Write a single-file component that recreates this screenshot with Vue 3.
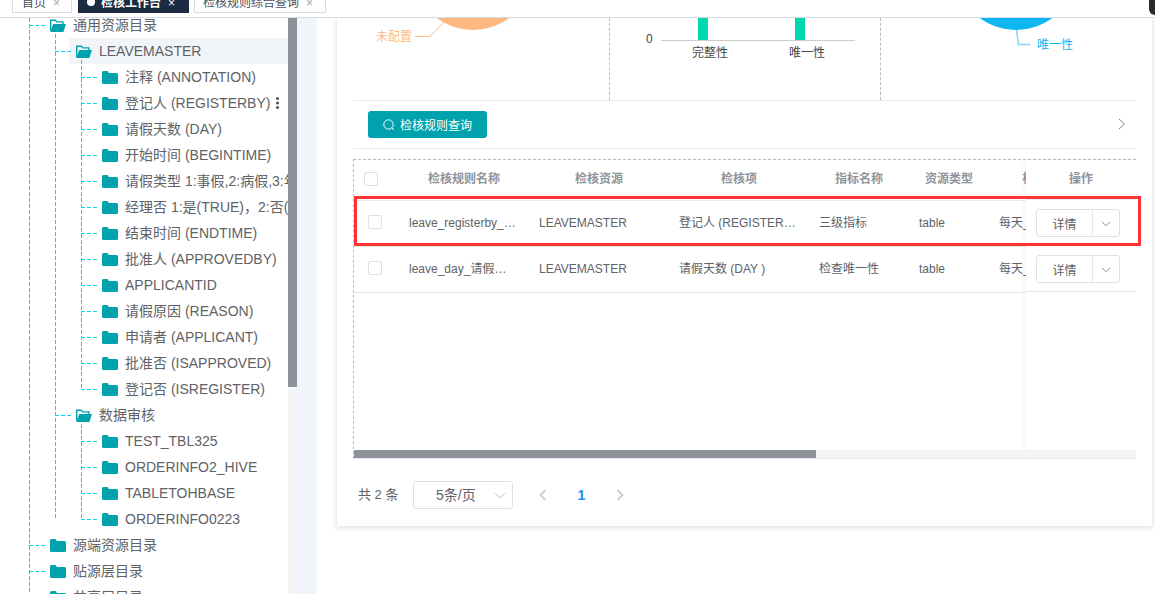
<template>
  <div class="page">
    <header class="tabbar">
      <div class="tabs">
        <div class="tab">首页<span class="close">×</span></div>
        <div class="tab active"><i class="dot"></i>检核工作台<span class="close">×</span></div>
        <div class="tab">检核规则综合查询<span class="close">×</span></div>
      </div>
      <div class="corner"></div>
    </header>

    <div class="body">
      <aside class="sidebar">
        <div class="tree-wrap">
          <ul class="tree">
            <li v-for="root in tree" :key="root.label">
              <div class="row">
                <div class="node">
                  <svg v-if="root.children" class="folder" viewBox="0 0 16 13"><path d="M.7 12V1.2h4.6l1.4 1.7h6.2v2" fill="none" stroke="#00a2ae" stroke-width="1.4"/><path d="M3.2 5H16l-2.6 8H.4z" fill="#00a2ae"/></svg>
                  <svg v-else class="folder" viewBox="0 0 16 13"><path d="M0 1.5A1.5 1.5 0 0 1 1.5 0h4L7 2h7.5A1.5 1.5 0 0 1 16 3.500v8a1.500 1.500 0 0 1-1.500 1.500h-13A1.500 1.500 0 0 1 0 11.500z" fill="#00a2ae"/></svg>
                  <span>{{ root.label }}</span>
                </div>
              </div>
              <ul v-if="root.children" class="children">
                <li v-for="group in root.children" :key="group.label">
                  <div class="row">
                    <div class="node" :class="{ current: group.current }">
                      <svg class="folder" viewBox="0 0 16 13"><path d="M.7 12V1.2h4.6l1.4 1.7h6.2v2" fill="none" stroke="#00a2ae" stroke-width="1.4"/><path d="M3.2 5H16l-2.6 8H.4z" fill="#00a2ae"/></svg>
                      <span>{{ group.label }}</span>
                    </div>
                  </div>
                  <ul class="children">
                    <li v-for="leaf in group.children" :key="leaf">
                      <div class="row">
                        <div class="node">
                          <svg class="folder" viewBox="0 0 16 13"><path d="M0 1.5A1.5 1.5 0 0 1 1.5 0h4L7 2h7.5A1.5 1.5 0 0 1 16 3.500v8a1.500 1.500 0 0 1-1.500 1.500h-13A1.500 1.500 0 0 1 0 11.500z" fill="#00a2ae"/></svg>
                          <span>{{ leaf }}</span>
                        </div>
                        <i v-if="leaf.startsWith('登记人')" class="kebab"></i>
                      </div>
                    </li>
                  </ul>
                </li>
              </ul>
            </li>
          </ul>
        </div>
        <div class="scroll-y"><div class="scroll-y-thumb"></div></div>
      </aside>
      <div class="gutter"></div>

      <main class="main">
        <section class="card">
          <div class="charts">
            <div class="chart">
              <svg width="256" height="82" viewBox="353 18 256 82">
                <circle cx="473" cy="-31" r="61" fill="#ffb980"/>
                <path d="M415 36.500h15l15-15" fill="none" stroke="#ffb980"/>
                <text x="376" y="41" class="pie-label" fill="#ffb980">未配置</text>
              </svg>
            </div>
            <div class="chart">
              <svg width="270" height="82" viewBox="610 18 270 82">
                <rect x="698" y="18" width="10" height="22" fill="#00d8b0"/>
                <rect x="795" y="18" width="10" height="22" fill="#00d8b0"/>
                <path d="M661 40.500h194" stroke="#ccc"/>
                <text x="646" y="43" class="axis">0</text>
                <text x="710" y="57" class="axis" text-anchor="middle">完整性</text>
                <text x="807" y="57" class="axis" text-anchor="middle">唯一性</text>
              </svg>
            </div>
            <div class="chart last">
              <svg width="255" height="82" viewBox="881 18 255 82">
                <circle cx="1016" cy="-31" r="61" fill="#0cb6f0"/>
                <path d="M1016.500 30l2 14.500h12" fill="none" stroke="#7fd6f7" stroke-width="1.500"/>
                <text x="1037" y="49" class="pie-label" fill="#0cb6f0">唯一性</text>
              </svg>
            </div>
          </div>

          <div class="toolbar">
            <button class="query-btn">
              <svg width="12" height="12" viewBox="0 0 12 12"><circle cx="5.500" cy="5.500" r="4.700" fill="none" stroke="#fff"/><path d="M9 9l2 2" stroke="#fff"/></svg>
              检核规则查询
            </button>
            <svg class="more" width="8" height="12" viewBox="0 0 8 12"><path d="M1 1l5.500 5L1 11" fill="none" stroke="#888"/></svg>
          </div>

          <div class="table-box">
            <div class="table-clip">
              <table class="grid">
                <colgroup>
                  <col v-for="w in colWidths" :key="w.id" :style="{ width: w.px + 'px' }" />
                </colgroup>
                <thead>
                  <tr>
                    <th class="check-head"><i class="checkbox"></i></th>
                    <th v-for="h in headers" :key="h">{{ h }}</th>
                  </tr>
                </thead>
                <tbody>
                  <tr v-for="row in rows" :key="row.name">
                    <td class="check-cell"><i class="checkbox"></i></td>
                    <td><div class="ellipsis name">{{ row.name }}</div></td>
                    <td><div class="ellipsis">LEAVEMASTER</div></td>
                    <td><div class="ellipsis">{{ row.item }}</div></td>
                    <td><div class="ellipsis">{{ row.level }}</div></td>
                    <td>table</td>
                    <td><div class="clip">每天_</div></td>
                  </tr>
                </tbody>
              </table>

              <div class="fixed-col">
                <div class="fixed-head">操作</div>
                <div v-for="row in rows" :key="row.name" class="fixed-cell">
                  <div class="split">
                    <span class="split-main">详情</span>
                    <span class="split-drop">
                      <svg width="10" height="6" viewBox="0 0 10 6"><path d="M1 .8l4 4 4-4" fill="none" stroke="#909399"/></svg>
                    </span>
                  </div>
                </div>
              </div>
              <div class="highlight"></div>
            </div>
            <div class="scroll-x"><div class="scroll-x-thumb"></div></div>
          </div>

          <footer class="pager">
            <span class="total">共 2 条</span>
            <div class="size-select">
              <span>5条/页</span>
              <svg width="12" height="7" viewBox="0 0 12 7"><path d="M1 1l5 5 5-5" fill="none" stroke="#c0c4cc"/></svg>
            </div>
            <svg class="nav first" width="8" height="12" viewBox="0 0 8 12"><path d="M6.500 1L1.500 6l5 5" fill="none" stroke="#c0c4cc" stroke-width="1.600"/></svg>
            <span class="current-page">1</span>
            <svg class="nav" width="8" height="12" viewBox="0 0 8 12"><path d="M1.500 1l5 5-5 5" fill="none" stroke="#c0c4cc" stroke-width="1.600"/></svg>
          </footer>
        </section>
      </main>
    </div>
  </div>
</template>

<script setup>
const leaves = [
  '注释 (ANNOTATION)',
  '登记人 (REGISTERBY)',
  '请假天数 (DAY)',
  '开始时间 (BEGINTIME)',
  '请假类型 1:事假,2:病假,3:年假,4:其他',
  '经理否 1:是(TRUE)，2:否(FALSE)',
  '结束时间 (ENDTIME)',
  '批准人 (APPROVEDBY)',
  'APPLICANTID',
  '请假原因 (REASON)',
  '申请者 (APPLICANT)',
  '批准否 (ISAPPROVED)',
  '登记否 (ISREGISTER)'
]

const tree = [
  {
    label: '通用资源目录',
    children: [
      { label: 'LEAVEMASTER', current: true, children: leaves },
      { label: '数据审核', children: ['TEST_TBL325', 'ORDERINFO2_HIVE', 'TABLETOHBASE', 'ORDERINFO0223'] }
    ]
  },
  { label: '源端资源目录' },
  { label: '贴源层目录' },
  { label: '共享层目录' }
]

const headers = ['检核规则名称', '检核资源', '检核项', '指标名称', '资源类型', '检核频率']

const colWidths = [
  { id: 'check', px: 45 },
  { id: 'name', px: 130 },
  { id: 'res', px: 140 },
  { id: 'item', px: 140 },
  { id: 'level', px: 100 },
  { id: 'type', px: 80 },
  { id: 'freq', px: 115 }
]

const rows = [
  { name: 'leave_registerby_完整性检核', item: '登记人 (REGISTERBY )', level: '三级指标' },
  { name: 'leave_day_请假天数唯一性', item: '请假天数 (DAY )', level: '检查唯一性' }
]
</script>

<style>
html, body {
  margin: 0;
  background: #fff;
}
</style>

<style scoped>
.page {
  width: 1155px;
  height: 594px;
  overflow: hidden;
  display: flex;
  flex-direction: column;
  font-family: "Liberation Sans", "Noto Sans CJK SC", sans-serif;
  color: #606266;
}

.tabbar {
  position: relative;
  z-index: 3;
  flex: none;
  height: 17px;
  background: #fff;
  border-bottom: 1px solid #d8dce5;
  overflow: hidden;
}
.tabs {
  display: flex;
  margin-top: -13px;
  padding-left: 12px;
  gap: 5px;
}
.tab {
  height: 24px;
  line-height: 30px;
  border: 1px solid #d8dce5;
  padding: 0 12px 0 8px;
  font-size: 12px;
  color: #495060;
  background: #fff;
  white-space: nowrap;
}
.tab:first-child {
  margin-right: 1px;
  padding: 0 11px 0 9px;
}
.tab.active {
  background: #1b2b41;
  border-color: #1b2b41;
  color: #fff;
  font-weight: bold;
  padding-right: 13px;
}
.dot {
  display: inline-block;
  width: 8px;
  height: 8px;
  border-radius: 50%;
  background: #fff;
  margin-right: 6px;
  vertical-align: 1px;
}
.close {
  margin-left: 7px;
  font-weight: normal;
  color: #a0a4ac;
}
.tab.active .close {
  color: #fff;
}
.corner {
  position: absolute;
  top: 0;
  right: 0;
  width: 6px;
  height: 15px;
  background: #2b2b2f;
  border-bottom-left-radius: 6px;
}

.body {
  flex: 1;
  display: flex;
  min-height: 0;
}

.sidebar {
  flex: none;
  width: 297px;
  display: flex;
}
.tree-wrap {
  width: 288px;
  overflow: hidden;
}
.tree {
  margin: -6px 0 0;
  padding: 0 0 0 29px;
  list-style: none;
  position: relative;
  font-size: 14px;
  line-height: 14px;
}
.tree::before {
  content: "";
  position: absolute;
  left: 29px;
  top: 0;
  bottom: 0;
  width: 1px;
  background: repeating-linear-gradient(to bottom, #00d8f0 0 4px, transparent 4px 6px);
}
.children {
  margin: 0 0 0 26px;
  padding: 0;
  list-style: none;
  position: relative;
}
.children::before {
  content: "";
  position: absolute;
  left: 0;
  top: -4px;
  bottom: 12px;
  width: 1px;
  background: repeating-linear-gradient(to bottom, #00d8f0 0 4px, transparent 4px 6px);
}
.row {
  position: relative;
  height: 26px;
}
.row::before {
  content: "";
  position: absolute;
  left: 0;
  top: 13px;
  width: 18px;
  height: 1px;
  background: repeating-linear-gradient(to right, #00d8f0 0 4px, transparent 4px 6px);
}
.node {
  height: 26px;
  margin-left: 14px;
  padding-left: 7px;
  display: flex;
  align-items: center;
  white-space: nowrap;
  overflow: hidden;
  color: #606266;
}
.node.current {
  background: #f1f5f9;
}
.folder {
  flex: none;
  width: 16px;
  height: 13px;
  margin-right: 7px;
}
.kebab {
  position: absolute;
  left: 195px;
  top: 7px;
  width: 3px;
  height: 3px;
  border-radius: 50%;
  background: #555;
  box-shadow: 0 4.5px 0 #555, 0 9px 0 #555;
}

.scroll-y {
  width: 9px;
  background: #f5f5f5;
}
.scroll-y-thumb {
  height: 369px;
  background: #8f9199;
}
.gutter {
  flex: none;
  width: 20px;
  background: #f0f4fb;
}

.main {
  flex: 1;
  padding-left: 20px;
  background: #fff;
}
.card {
  width: 815px;
  height: 508px;
  padding: 0 16px;
  box-sizing: border-box;
  background: #fff;
  box-shadow: 0 1px 6px rgba(0, 0, 0, 0.16);
}

.charts {
  display: flex;
  height: 82px;
  border-bottom: 1px solid #e6ebf5;
}
.chart {
  overflow: hidden;
  border-right: 1px dashed #bbb;
}
.chart.last {
  border-right: 0;
}
.chart svg {
  display: block;
}
.pie-label {
  font-size: 12px;
}
.axis {
  font-size: 12px;
  fill: #444;
}

.toolbar {
  height: 47px;
  padding: 0 10px 0 15px;
  display: flex;
  align-items: center;
  justify-content: space-between;
  border-bottom: 1px solid #e6ebf5;
}
.more {
  margin-bottom: 2px;
}
.query-btn {
  width: 119px;
  height: 27px;
  padding: 0;
  display: flex;
  align-items: center;
  justify-content: center;
  gap: 5px;
  border: 0;
  border-radius: 3px;
  background: #00a2ae;
  color: #fff;
  font: 12px "Liberation Sans", "Noto Sans CJK SC", sans-serif;
}

.table-box {
  margin-top: 10px;
  height: 300px;
  border-top: 1px dashed #bbb;
  border-left: 1px dashed #bbb;
  display: flex;
  flex-direction: column;
  box-sizing: border-box;
}
.table-clip {
  position: relative;
  flex: 1;
  min-height: 0;
}
.grid {
  width: 750px;
  table-layout: fixed;
  border-collapse: collapse;
  font-size: 12px;
  line-height: 14px;
  color: #606266;
}
.grid th {
  height: 40px;
  padding: 0 0 2px;
  box-sizing: border-box;
  font-weight: bold;
  color: #909399;
  text-align: center;
  border-bottom: 1px solid #e6ebf5;
}
.grid td {
  height: 46px;
  padding: 0 10px;
  box-sizing: border-box;
  border-bottom: 1px solid #dfe6ec;
}
.grid .check-head {
  text-align: left;
  padding: 2px 0 4px 10px;
}
.grid .check-cell {
  padding: 0 0 2px 14px;
}
.checkbox {
  display: block;
  width: 12px;
  height: 12px;
  border: 1px solid #dcdfe6;
  border-radius: 2px;
  background: #fff;
}
.ellipsis {
  overflow: hidden;
  white-space: nowrap;
  text-overflow: ellipsis;
}
.name {
  width: 108px;
}
.clip {
  overflow: hidden;
  white-space: nowrap;
}

.fixed-col {
  position: absolute;
  top: 0;
  left: 672px;
  width: 110px;
  height: 290px;
  background: #fff;
  box-shadow: -3px 0 4px rgba(0, 0, 0, 0.03);
}
.fixed-head {
  height: 40px;
  padding-bottom: 2px;
  box-sizing: border-box;
  display: flex;
  align-items: center;
  justify-content: center;
  border-bottom: 1px solid #e6ebf5;
  font-size: 12px;
  line-height: 14px;
  font-weight: bold;
  color: #909399;
}
.fixed-cell {
  height: 46px;
  box-sizing: border-box;
  padding: 9px 0 0 10px;
  border-bottom: 1px solid #dfe6ec;
}
.split {
  width: 84px;
  height: 28px;
  box-sizing: border-box;
  display: flex;
  border: 1px solid #dcdfe6;
  border-radius: 3px;
  font-size: 12px;
  line-height: 14px;
  color: #606266;
  background: #fff;
}
.split-main {
  width: 55px;
  padding-top: 4px;
  box-sizing: border-box;
  display: flex;
  align-items: center;
  justify-content: center;
}
.split-drop {
  flex: 1;
  padding-top: 2px;
  box-sizing: border-box;
  display: flex;
  align-items: center;
  justify-content: center;
  border-left: 1px solid #e6e8ec;
}

.highlight {
  position: absolute;
  left: 0;
  top: 36px;
  width: 781px;
  height: 44px;
  border: 3px solid #f33;
  pointer-events: none;
}

.scroll-x {
  flex: none;
  height: 9px;
  background: #f5f5f5;
  border-bottom: 1px solid #e6ebf5;
  box-sizing: border-box;
}
.scroll-x-thumb {
  width: 462px;
  height: 8px;
  background: #8f9199;
}

.pager {
  margin-top: 22px;
  height: 28px;
  padding-left: 5px;
  display: flex;
  align-items: center;
  font-size: 13px;
  line-height: 14px;
}
.total {
  width: 55px;
  flex: none;
}
.size-select {
  width: 100px;
  height: 28px;
  box-sizing: border-box;
  padding: 0 6px 0 22px;
  display: flex;
  align-items: center;
  justify-content: space-between;
  border: 1px solid #dcdfe6;
  border-radius: 3px;
  font-size: 14px;
}
.nav {
  flex: none;
}
.nav.first {
  margin-left: 26px;
}
.current-page {
  flex: none;
  width: 69px;
  text-align: center;
  font-size: 14px;
  font-weight: bold;
  color: #1890ff;
}
</style>
